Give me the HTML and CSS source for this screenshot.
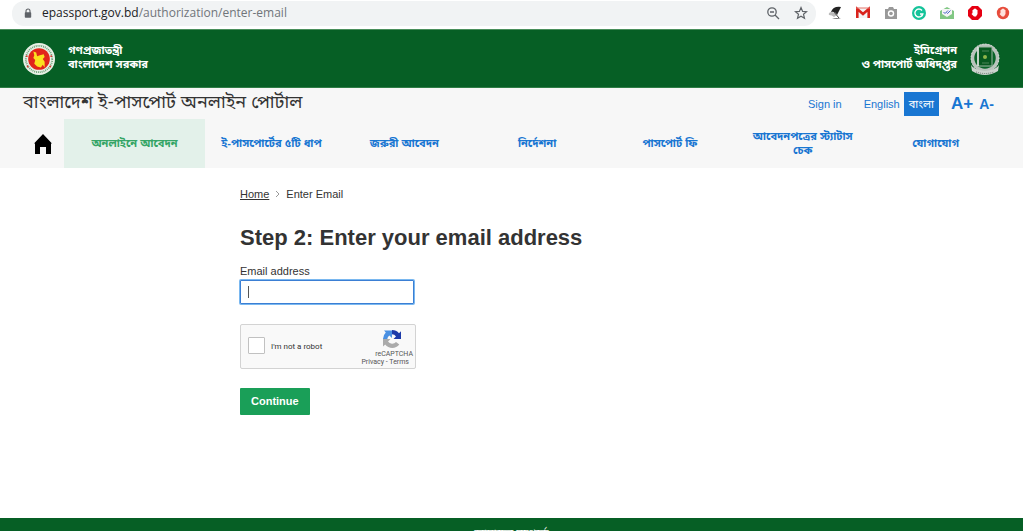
FILE: index.html
```
<!DOCTYPE html>
<html lang="bn">
<head>
    <meta charset="UTF-8">
    <meta name="viewport" content="width=device-width, initial-scale=1.0">
    <title>Enter Email - ই-পাসপোর্ট অনলাইন পোর্টাল</title>
    <link rel="stylesheet" href="styles.css">
</head>
<body>
    <div class="toolbar">
        <div class="address">
            <svg class="lock" viewBox="0 0 10 12" width="8" height="10"><path d="M2.5 6V3.5a2.5 2.5 0 0 1 5 0V6" fill="none" stroke="#5f6368" stroke-width="1.4"/><rect x="1" y="5" width="8" height="7" rx="1" fill="#5f6368"/></svg>
            <span class="url"><b>epassport.gov.bd</b>/authorization/enter-email</span>
            <button type="button" class="tool" aria-label="Zoom">
                <svg viewBox="0 0 14 14" width="14" height="14" fill="none" stroke="#5f6368"><circle cx="6" cy="6" r="4.2" stroke-width="1.3"/><path d="M9 9l4 4M4 6h4" stroke-width="1.3"/></svg>
            </button>
            <button type="button" class="tool" aria-label="Bookmark">
                <svg viewBox="0 0 14 14" width="14" height="14"><path d="M7 1.6l1.6 3.8 4 .3-3.1 2.6 1 4L7 10.200l-3.500 2.100 1-4L1.400 5.700l4-.3z" fill="none" stroke="#5f6368" stroke-width="1.2"/></svg>
            </button>
        </div>
        <div class="extensions">
            <svg viewBox="0 0 14 14"><path d="M3 6Q5 0 13 1L9 9Q7 5 3 6z" fill="#222"/><path d="M3 6Q0 7 1 9q3 0 5 2l3-2Q7 6 3 6z" fill="#bbb"/><path d="M6 6l5 6" stroke="#444" stroke-width="1"/><path d="M4 13q5-2 9 0z" fill="#777"/></svg>
            <svg viewBox="0 0 14 14"><path d="M0 2h14v10H0z" fill="#f4f4f4"/><path d="M1.300 12V3L7 8l5.700-5v9" fill="none" stroke="#d9231c" stroke-width="2.600"/><path d="M0 2h14" stroke="#e57368" stroke-width="1"/></svg>
            <svg viewBox="0 0 14 14"><path d="M1 3h3l1-2h4l1 2h3v10H1z" fill="#999"/><circle cx="7" cy="7.500" r="3.200" fill="#fff"/><circle cx="7" cy="7.500" r="1.800" fill="#999"/></svg>
            <svg viewBox="0 0 14 14"><circle cx="7" cy="7" r="7" fill="#15c39a"/><path d="M10 4.500A4 4 0 1 0 10.800 8H8" fill="none" stroke="#fff" stroke-width="1.400"/></svg>
            <svg viewBox="0 0 14 14"><path d="M0 5l7-4 7 4v8H0z" fill="#81c784"/><path d="M2 3h10v5l-5 3-5-3z" fill="#f5f5f5"/><path d="M3.500 6l1.500 1.500L8 4.500M6.500 6.500l1 1 3-3" fill="none" stroke="#4966c9"/></svg>
            <svg viewBox="0 0 14 14"><path d="M4 0h6l4 4v6l-4 4H4l-4-4V4z" fill="#e60012"/><path d="M4.500 7V4h1V3h1v-.6h1V3h1v1h1v4l-1.500 2.600H6L3.500 8z" fill="#fff"/></svg>
            <svg viewBox="0 0 14 14"><circle cx="7" cy="7" r="6.200" fill="#e74c3c"/><path d="M4.500 7V4h1V3h1v-.6h1V3h1v1h1v4l-1.500 2.600H6L3.500 8z" fill="#ffe1dc"/></svg>
        </div>
    </div>

    <header class="top">
        <div class="brand">
            <svg viewBox="0 0 34 34" width="32" height="32">
                <circle cx="17" cy="17" r="17" fill="#e9f1e6"/>
                <circle cx="17" cy="17" r="14" fill="none" stroke="#6b9f78" stroke-width="2" stroke-dasharray="1 1"/>
                <circle cx="17" cy="17" r="11.500" fill="#e1251b"/>
                <path d="M11 9l3 1 1 4 3-1 4-1 1 3-2 2 2 3v6l-2-3-2 3-4-1-3-3 1-4-2-2 1-3z" fill="#fbe11f"/>
                <g fill="#d8362c"><circle cx="4" cy="14" r="1"/><circle cx="5" cy="25" r="1"/><circle cx="30" cy="14" r="1"/><circle cx="29" cy="25" r="1"/></g>
            </svg>
            <p>গণপ্রজাতন্ত্রী<br>বাংলাদেশ সরকার</p>
        </div>
        <div class="brand brand-right">
            <p>ইমিগ্রেশন<br>ও পাসপোর্ট অধিদপ্তর</p>
            <svg viewBox="0 0 30 34" width="30" height="34">
                <circle cx="15" cy="16" r="12.500" fill="#0a6428" stroke="#b9c3bc" stroke-width="3.500"/>
                <circle cx="15" cy="16" r="14" fill="none" stroke="#e4e9e5" stroke-width="1" stroke-dasharray="1 2"/>
                <path d="M1 23q3 5 14 6 11-1 14-6l-1 6q-13 8-26 0z" fill="#ccd3ce"/>
                <path d="M6 30q9 3 18 0" fill="none" stroke="#66756b" stroke-width="1" stroke-dasharray="1 1"/>
                <rect x="8" y="5" width="14" height="19" fill="#07581f" stroke="#9fb8a5"/>
                <path d="M8 5v19" stroke="#e6ece7" stroke-width="1.500"/>
                <circle cx="15" cy="15" r="2" fill="#8fb54a"/>
                <path d="M12 9h7M12 21h7" stroke="#4d8659"/>
            </svg>
        </div>
    </header>

    <div class="portal">
        <div class="title-row">
            <p class="portal-name">বাংলাদেশ ই-পাসপোর্ট অনলাইন পোর্টাল</p>
            <div class="options">
                <a href="#" class="sign-in">Sign in</a>
                <a href="#" class="lang">English</a>
                <a href="#" class="lang lang-active">বাংলা</a>
                <button type="button" class="font-size font-plus">A+</button>
                <button type="button" class="font-size">A-</button>
            </div>
        </div>
        <nav>
            <a href="#" class="home" aria-label="Home">
                <svg viewBox="0 0 18 20" width="18" height="20"><path d="M9 0l9 9.500h-1V20h-5v-7H6v7H1V9.500H0z" fill="#000"/></svg>
            </a>
            <a href="#" class="active">অনলাইনে আবেদন</a>
            <a href="#">ই-পাসপোর্টের ৫টি ধাপ</a>
            <a href="#">জরুরী আবেদন</a>
            <a href="#">নির্দেশনা</a>
            <a href="#">পাসপোর্ট ফি</a>
            <a href="#">আবেদনপত্রের স্ট্যাটাস চেক</a>
            <a href="#">যোগাযোগ</a>
        </nav>
    </div>

    <main>
        <div class="breadcrumb">
            <a href="#">Home</a>
            <svg viewBox="0 0 5 8" width="5" height="8"><path d="M1 1l3 3-3 3" fill="none" stroke="#999"/></svg>
            <span>Enter Email</span>
        </div>
        <h1>Step 2: Enter your email address</h1>
        <form>
            <label for="email">Email address</label>
            <input type="email" id="email" class="email">
            <div class="captcha">
                <input type="checkbox" id="robot">
                <label for="robot">I'm not a robot</label>
                <div class="captcha-logo">
                    <svg viewBox="0 0 20 20" width="20" height="20">
                        <path d="M10 1A9 9 0 0 1 17 4.300L19 2.300V10H11.500L14 7.400A5 5 0 0 0 10 5.300z" fill="#1c3aa9"/>
                        <path d="M1 10A9 9 0 0 1 3.800 3.400L2 1.500H10V9L7.400 6.400A5 5 0 0 0 5.300 10z" fill="#4a90e2"/>
                        <path d="M1 10H8.500L6 12.500A5 5 0 0 0 14 13l3.300 2.600A9 9 0 0 1 3.200 15.600L1 17.500z" fill="#ababab"/>
                    </svg>
                    <span>reCAPTCHA</span>
                    <small><a href="#">Privacy</a> - <a href="#">Terms</a></small>
                </div>
            </div>
            <button type="submit" class="btn">Continue</button>
        </form>
    </main>

    <footer>
        <a href="#">আমাদের সম্পর্কে</a>
    </footer>
</body>
</html>
```
FILE: styles.css
```
* {
    margin: 0;
    padding: 0;
    box-sizing: border-box;
}

body {
    height: 100vh;
    display: flex;
    flex-direction: column;
    overflow: hidden;
    background: #fff;
    color: #333;
    font-family: "Liberation Sans", "Noto Sans Bengali", "Noto Sans", sans-serif;
    font-size: 11px;
    line-height: 14px;
}

a {
    color: #1976d2;
    text-decoration: none;
}

button {
    border: none;
    background: none;
    font-family: inherit;
    cursor: pointer;
}

svg {
    display: block;
    flex-shrink: 0;
}

/* browser bar */
.toolbar {
    display: flex;
    align-items: center;
    height: 29px;
    padding: 0 13px 3px 12px;
}

.address {
    flex: 1;
    display: flex;
    align-items: center;
    gap: 14px;
    height: 25px;
    padding: 0 8px 0 12px;
    border-radius: 12px;
    background: #f1f3f4;
}

.url {
    flex: 1;
    margin-left: -4px;
    color: #70757a;
    font-family: "Open Sans", sans-serif;
    font-size: 12px;
}

.url b {
    color: #202124;
    font-weight: 400;
}

.extensions {
    display: flex;
    gap: 14px;
    margin-left: 12px;
}

.extensions svg {
    width: 14px;
    height: 14px;
}

/* header */
.top {
    display: flex;
    justify-content: space-between;
    align-items: center;
    height: 59px;
    padding: 0 23px;
    border-top: 1px solid #4a8f5c;
    border-bottom: 1px solid #2f7d46;
    background: #065f25;
    color: #fff;
}

.brand {
    display: flex;
    align-items: center;
    gap: 13px;
    font-weight: 700;
}

.brand p {
    padding-bottom: 4px;
}

.brand-right {
    text-align: right;
}

/* portal name and menu */
.portal {
    background: #f7f7f7;
}

.title-row {
    display: flex;
    justify-content: space-between;
    align-items: center;
    height: 31px;
    padding: 0 29px 0 23px;
}

.portal-name {
    padding-bottom: 4px;
    font-size: 18px;
    line-height: 26px;
}

.options {
    display: flex;
    align-items: center;
}

.sign-in {
    margin-right: 22px;
}

.lang-active {
    margin: 0 12px 0 4px;
    padding: 5px;
    background: #1976d2;
    color: #fff;
}

.font-size {
    color: #1976d2;
    font-size: 14px;
    font-weight: 700;
}

.font-plus {
    margin-right: 6px;
    font-size: 17px;
}

nav {
    display: grid;
    grid-template-columns: 41px 141px repeat(6, 1fr);
    padding: 0 21px 0 23px;
}

nav a {
    display: flex;
    justify-content: center;
    align-items: center;
    min-height: 49px;
    padding: 0 12px 2px;
    font-weight: 700;
    text-align: center;
}

nav .home {
    padding: 0 2px 0 0;
}

nav .active {
    background: #e3f1ea;
    color: #35a566;
}

/* content */
main {
    flex: 1;
    width: 100%;
    max-width: 543px;
    margin: 0 auto;
    padding-top: 19px;
}

.breadcrumb {
    display: flex;
    align-items: center;
    gap: 6px;
}

.breadcrumb a {
    color: #333;
    text-decoration: underline;
}

h1 {
    margin: 23px 0 12px;
    font-size: 22px;
    line-height: 28px;
}

form label {
    display: block;
}

.email {
    display: block;
    width: 174px;
    height: 24px;
    margin: 2px 0 20px;
    padding: 0 8px;
    border: 1px solid #3b7fd4;
    border-radius: 1px;
    outline: none;
    box-shadow: 0 0 0 1px #7ab8f0;
    background: linear-gradient(#555, #555) 7px center / 1px 12px no-repeat #fff;
}

.captcha {
    display: flex;
    align-items: center;
    width: 176px;
    height: 45px;
    margin-bottom: 19px;
    padding: 0 2px 0 7px;
    border: 1px solid #d3d3d3;
    border-radius: 2px;
    background: #f9f9f9;
    font-family: Roboto, sans-serif;
    font-size: 8px;
    line-height: 8px;
}

.captcha input {
    appearance: none;
    width: 17px;
    height: 17px;
    margin: 0 6px 2px 0;
    border: 1px solid #c1c1c1;
    border-radius: 1px;
    background: #fff;
}

.captcha-logo {
    display: flex;
    flex-direction: column;
    align-items: flex-end;
    margin-left: auto;
    padding-top: 2px;
    color: #555;
    font-size: 7px;
}

.captcha-logo svg {
    margin: 0 11px 1px 0;
}

.captcha-logo small {
    margin-right: 4px;
    font-size: 7px;
}

.captcha-logo a {
    color: #555;
}

.btn {
    display: block;
    height: 27px;
    padding: 0 11px 2px;
    border-radius: 1px;
    background: #1a9f58;
    color: #fff;
    font-size: 11px;
    font-weight: 700;
}

/* footer */
footer {
    height: 13px;
    padding-top: 8px;
    background: #065f25;
    text-align: center;
}

footer a {
    color: #fff;
}
```
